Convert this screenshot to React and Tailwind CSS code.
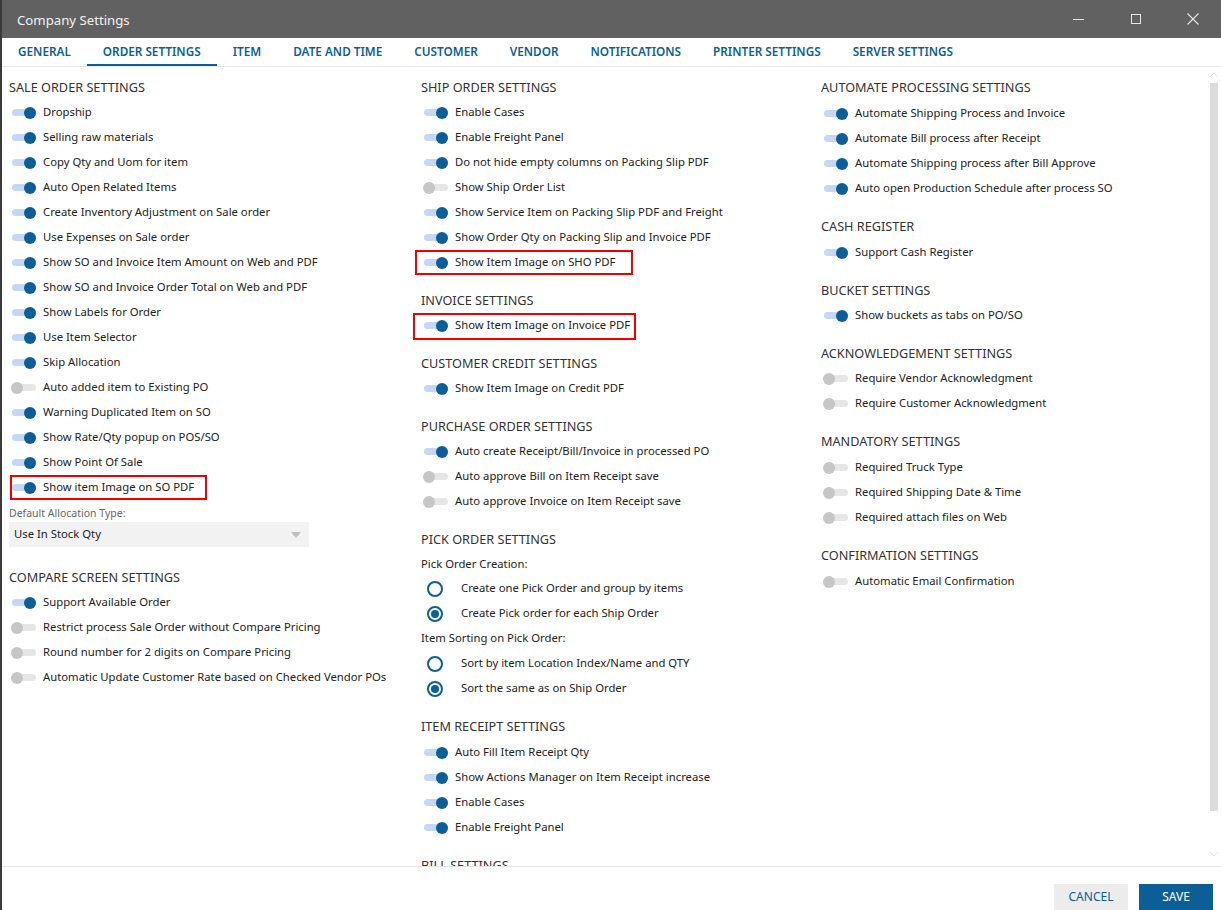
import React from "react";

const FONT = { fontFamily: '"Noto Sans", "Open Sans", Arial, sans-serif' };

function Toggle({ on }) {
  return (
    <div className="relative w-[25px] h-[12px] shrink-0">
      <div className={`absolute left-[1px] right-0 top-[2.5px] h-[7px] rounded-full ${on ? "bg-[#c6d6f7]" : "bg-[#e6e6e6]"}`} />
      <div className={`absolute top-0 w-[12px] h-[12px] rounded-full ${on ? "right-0 bg-[#0b5e96]" : "left-0 bg-[#c6c6c6]"}`} />
    </div>
  );
}

function Row({ on, label, box, boxCls }) {
  return (
    <div className="relative h-[25px] flex items-center pl-[2px]">
      <Toggle on={on} />
      <span className="ml-[7px] text-[11.3px] text-[#222] whitespace-nowrap">{label}</span>
      {box && <div className={`absolute border-2 border-[#f00000] pointer-events-none ${boxCls}`} />}
    </div>
  );
}

function Radio({ checked, label }) {
  return (
    <div className="h-[25px] flex items-center">
      <div className="ml-[6px] w-[16px] h-[16px] rounded-full border-2 border-[#0b5e96] flex items-center justify-center shrink-0">
        {checked && <div className="w-[8px] h-[8px] rounded-full bg-[#0b5e96]" />}
      </div>
      <span className="ml-[18px] text-[11.3px] text-[#222] whitespace-nowrap">{label}</span>
    </div>
  );
}

function Header({ children, first }) {
  return (
    <div className={`h-[25px] flex items-center text-[12.7px] text-[#333] whitespace-nowrap ${first ? "" : "mt-[13px]"}`}>
      {children}
    </div>
  );
}

function SubLabel({ children }) {
  return <div className="h-[25px] flex items-center text-[11.3px] text-[#222]">{children}</div>;
}

const saleOrder = [
  [true, "Dropship"],
  [true, "Selling raw materials"],
  [true, "Copy Qty and Uom for item"],
  [true, "Auto Open Related Items"],
  [true, "Create Inventory Adjustment on Sale order"],
  [true, "Use Expenses on Sale order"],
  [true, "Show SO and Invoice Item Amount on Web and PDF"],
  [true, "Show SO and Invoice Order Total on Web and PDF"],
  [true, "Show Labels for Order"],
  [true, "Use Item Selector"],
  [true, "Skip Allocation"],
  [false, "Auto added item to Existing PO"],
  [true, "Warning Duplicated Item on SO"],
  [true, "Show Rate/Qty popup on POS/SO"],
  [true, "Show Point Of Sale"],
];

const compare = [
  [true, "Support Available Order"],
  [false, "Restrict process Sale Order without Compare Pricing"],
  [false, "Round number for 2 digits on Compare Pricing"],
  [false, "Automatic Update Customer Rate based on Checked Vendor POs"],
];

const shipOrder = [
  [true, "Enable Cases"],
  [true, "Enable Freight Panel"],
  [true, "Do not hide empty columns on Packing Slip PDF"],
  [false, "Show Ship Order List"],
  [true, "Show Service Item on Packing Slip PDF and Freight"],
  [true, "Show Order Qty on Packing Slip and Invoice PDF"],
];

const tabs = ["GENERAL", "ORDER SETTINGS", "ITEM", "DATE AND TIME", "CUSTOMER", "VENDOR", "NOTIFICATIONS", "PRINTER SETTINGS", "SERVER SETTINGS"];

export default function App() {
  return (
    <div style={FONT} className="w-[1221px] h-[910px] bg-white flex flex-col overflow-hidden border-l-2 border-[#3a3a3a] relative">
      {/* title bar */}
      <div className="h-[38px] bg-[#616161] flex items-center shrink-0">
        <span className="ml-[15px] pt-[3px] text-[13.2px] text-[#f2f2f2]">Company Settings</span>
        <div className="ml-auto flex items-center h-full text-[#eaeaea]">
          <div className="w-[57px] h-full flex items-center justify-center">
            <div className="w-[11px] h-[1px] bg-[#e6e6e6]" />
          </div>
          <div className="w-[57px] h-full flex items-center justify-center">
            <div className="w-[10px] h-[10px] border border-[#e6e6e6]" />
          </div>
          <div className="w-[57px] h-full flex items-center justify-center mr-[0px]">
            <svg width="12" height="12" viewBox="0 0 12 12"><path d="M0.5 0.5 L11.5 11.5 M11.5 0.5 L0.5 11.5" stroke="#e6e6e6" strokeWidth="1.1" /></svg>
          </div>
        </div>
      </div>
      {/* tabs */}
      <div className="h-[29px] border-b border-[#e8e8e8] flex items-stretch shrink-0">
        {tabs.map((t) => (
          <div key={t} className={`px-[16px] pt-[1px] flex items-center text-[11.75px] font-semibold text-[#0b5e96] whitespace-nowrap ${t === "ORDER SETTINGS" ? "border-b-2 border-[#0b5e96]" : "border-b-2 border-transparent"}`}>
            {t}
          </div>
        ))}
      </div>
      {/* content */}
      <div className="relative flex-1 overflow-hidden">
        <div className="grid grid-cols-[412px_400px_1fr] pl-[7px] pt-[8px]">
          {/* column 1 */}
          <div>
            <Header first>SALE ORDER SETTINGS</Header>
            {saleOrder.map(([on, l]) => <Row key={l} on={on} label={l} />)}
            <Row on label="Show item Image on SO PDF" box boxCls="left-[1px] top-0 w-[197px] h-[25px]" />
            <div className="h-[22px] flex items-end text-[10.5px] text-[#666]">Default Allocation Type:</div>
            <div className="w-[300px] h-[25px] bg-[#f2f2f2] flex items-center pl-[5px] pr-[8px] mt-[0px]">
              <span className="text-[11.3px] text-[#222]">Use In Stock Qty</span>
              <svg className="ml-auto" width="10" height="6" viewBox="0 0 10 6"><path d="M0 0 L10 0 L5 6 Z" fill="#bdbdbd" /></svg>
            </div>
            <div className="mt-[18px]">
              <Header first>COMPARE SCREEN SETTINGS</Header>
            </div>
            {compare.map(([on, l]) => <Row key={l} on={on} label={l} />)}
          </div>
          {/* column 2 */}
          <div>
            <Header first>SHIP ORDER SETTINGS</Header>
            {shipOrder.map(([on, l]) => <Row key={l} on={on} label={l} />)}
            <Row on label="Show Item Image on SHO PDF" box boxCls="left-[-6px] top-0 w-[218px] h-[25px]" />
            <Header>INVOICE SETTINGS</Header>
            <Row on label="Show Item Image on Invoice PDF" box boxCls="left-[-8px] top-0 w-[223px] h-[27px]" />
            <Header>CUSTOMER CREDIT SETTINGS</Header>
            <Row on label="Show Item Image on Credit PDF" />
            <Header>PURCHASE ORDER SETTINGS</Header>
            <Row on label="Auto create Receipt/Bill/Invoice in processed PO" />
            <Row on={false} label="Auto approve Bill on Item Receipt save" />
            <Row on={false} label="Auto approve Invoice on Item Receipt save" />
            <Header>PICK ORDER SETTINGS</Header>
            <SubLabel>Pick Order Creation:</SubLabel>
            <div className="-mt-[1px]">
              <Radio label="Create one Pick Order and group by items" />
              <Radio checked label="Create Pick order for each Ship Order" />
              <SubLabel>Item Sorting on Pick Order:</SubLabel>
              <Radio label="Sort by item Location Index/Name and QTY" />
              <Radio checked label="Sort the same as on Ship Order" />
            </div>
            <div className="mt-[2px]"><Header>ITEM RECEIPT SETTINGS</Header></div>
            <div className="mt-[1px]">
              <Row on label="Auto Fill Item Receipt Qty" />
              <Row on label="Show Actions Manager on Item Receipt increase" />
              <Row on label="Enable Cases" />
              <Row on label="Enable Freight Panel" />
            </div>
            <Header>BILL SETTINGS</Header>
          </div>
          {/* column 3 */}
          <div>
            <Header first>AUTOMATE PROCESSING SETTINGS</Header>
            <div className="mt-[1px]">
              <Row on label="Automate Shipping Process and Invoice" />
              <Row on label="Automate Bill process after Receipt" />
              <Row on label="Automate Shipping process after Bill Approve" />
              <Row on label="Auto open Production Schedule after process SO" />
            </div>
            <Header>CASH REGISTER</Header>
            <div className="mt-[1px]"><Row on label="Support Cash Register" /></div>
            <Header>BUCKET SETTINGS</Header>
            <Row on label="Show buckets as tabs on PO/SO" />
            <Header>ACKNOWLEDGEMENT SETTINGS</Header>
            <Row on={false} label="Require Vendor Acknowledgment" />
            <Row on={false} label="Require Customer Acknowledgment" />
            <Header>MANDATORY SETTINGS</Header>
            <div className="mt-[1px]">
              <Row on={false} label="Required Truck Type" />
              <Row on={false} label="Required Shipping Date & Time" />
              <Row on={false} label="Required attach files on Web" />
            </div>
            <Header>CONFIRMATION SETTINGS</Header>
            <div className="mt-[1px]"><Row on={false} label="Automatic Email Confirmation" /></div>
          </div>
        </div>
        {/* scrollbar */}
        <div className="absolute right-[2px] top-0 bottom-0 w-[10px] flex flex-col items-center">
          <svg className="mt-[5px]" width="10" height="6" viewBox="0 0 10 6"><path d="M1 5 L5 1 L9 5" stroke="#e0e0e0" fill="none" strokeWidth="1" /></svg>
          <div className="mt-[5px] w-[8px] h-[728px] bg-[#dcdcdc]" />
          <svg className="mt-[40px]" width="10" height="6" viewBox="0 0 10 6"><path d="M1 1 L5 5 L9 1" stroke="#e0e0e0" fill="none" strokeWidth="1" /></svg>
        </div>
      </div>
      {/* footer */}
      <div className="h-[44px] border-t border-[#e6e6e6] shrink-0 flex items-start justify-end pt-[17px] pr-[8px] gap-[11px]">
        <button className="w-[74px] h-[26px] bg-[#ececec] text-[12px] text-[#0b5e96]">CANCEL</button>
        <button className="w-[74px] h-[26px] bg-[#0b5e96] text-[12px] text-white">SAVE</button>
      </div>
    </div>
  );
}
